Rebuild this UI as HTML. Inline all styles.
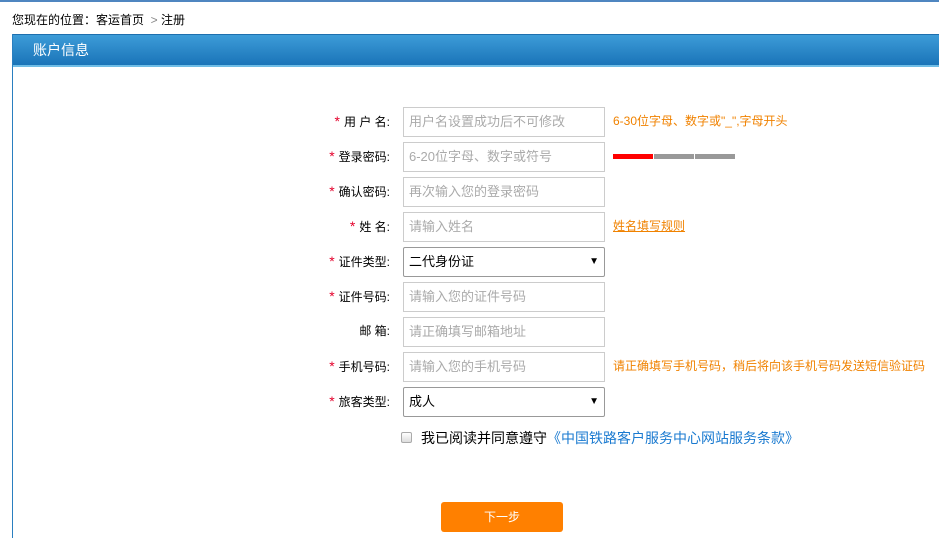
<!DOCTYPE html>
<html><head><meta charset="utf-8"><style>
*{margin:0;padding:0;box-sizing:border-box}
body{width:939px;height:538px;overflow:hidden;background:#fff;font-family:"Liberation Sans","Noto Sans CJK SC",sans-serif;font-size:12px;color:#333;position:relative}
.top{position:absolute;left:0;top:0;width:939px;height:2px;background:#4f86c0}
.crumb{position:absolute;left:12px;top:11px;color:#000;font-size:12px}
.panel{position:absolute;left:12px;top:34px;width:927px;height:504px;border-left:1px solid #2a7fc0}
.hd{height:31px;background:linear-gradient(#3d9cd8,#1a74b8);border-top:1px solid #1e6fae;color:#fff;font-size:14px;line-height:30px;padding-left:20px}
.hl{height:2px;background:#6fbde6}
.lab{position:absolute;width:120px;text-align:right;left:270px;color:#000;font-size:12px;line-height:29px}
.lab b{color:#e4002b;font-weight:normal;font-size:14px;margin-right:4px}
.in{position:absolute;left:403px;width:202px;height:30px;border:1px solid #ccc;color:#aaa;font-size:13px;line-height:28px;padding-left:5px}
.sel{border-color:#999;color:#000;border-radius:2px}
.sel i{position:absolute;right:5px;top:0;font-style:normal;font-size:10px;color:#000}
.tip{position:absolute;left:613px;color:#f08200;font-size:12px;line-height:29px}
.bar{position:absolute;top:154px;height:5px;width:40px;background:#999}
</style></head><body>
<div class="top"></div>
<div class="crumb">您现在的位置：客运首页 &nbsp;<span style="color:#888">&gt;</span> 注册</div>
<div class="panel"><div class="hd">账户信息</div><div class="hl"></div></div>

<div class="lab" style="top:107px"><b>*</b>用 户 名:</div><div class="in" style="top:107px">用户名设置成功后不可修改</div><div class="tip" style="top:107px">6-30位字母、数字或"_",字母开头</div>
<div class="lab" style="top:142px"><b>*</b>登录密码:</div><div class="in" style="top:142px">6-20位字母、数字或符号</div>
<div class="bar" style="left:613px;background:#f00"></div><div class="bar" style="left:654px"></div><div class="bar" style="left:695px"></div>
<div class="lab" style="top:177px"><b>*</b>确认密码:</div><div class="in" style="top:177px">再次输入您的登录密码</div>
<div class="lab" style="top:212px"><b>*</b>姓 名:</div><div class="in" style="top:212px">请输入姓名</div><div class="tip" style="top:212px;text-decoration:underline">姓名填写规则</div>
<div class="lab" style="top:247px"><b>*</b>证件类型:</div><div class="in sel" style="top:247px">二代身份证<i>▼</i></div>
<div class="lab" style="top:282px"><b>*</b>证件号码:</div><div class="in" style="top:282px">请输入您的证件号码</div>
<div class="lab" style="top:317px">邮 箱:</div><div class="in" style="top:317px">请正确填写邮箱地址</div>
<div class="lab" style="top:352px"><b>*</b>手机号码:</div><div class="in" style="top:352px">请输入您的手机号码</div><div class="tip" style="top:352px">请正确填写手机号码，稍后将向该手机号码发送短信验证码</div>
<div class="lab" style="top:387px"><b>*</b>旅客类型:</div><div class="in sel" style="top:387px">成人<i>▼</i></div>
<div style="position:absolute;left:401px;top:432px;width:11px;height:11px;border:1px solid #aaa;border-radius:2px;background:linear-gradient(#fff,#ddd)"></div>
<div style="position:absolute;left:421px;top:428px;font-size:14px;color:#000">我已阅读并同意遵守<span style="color:#1a7ad0">《中国铁路客户服务中心网站服务条款》</span></div>
<div style="position:absolute;left:441px;top:502px;width:122px;height:30px;background:#ff8000;border-radius:3px;color:#fff;text-align:center;line-height:30px;font-size:12px">下一步</div>
</body></html>
